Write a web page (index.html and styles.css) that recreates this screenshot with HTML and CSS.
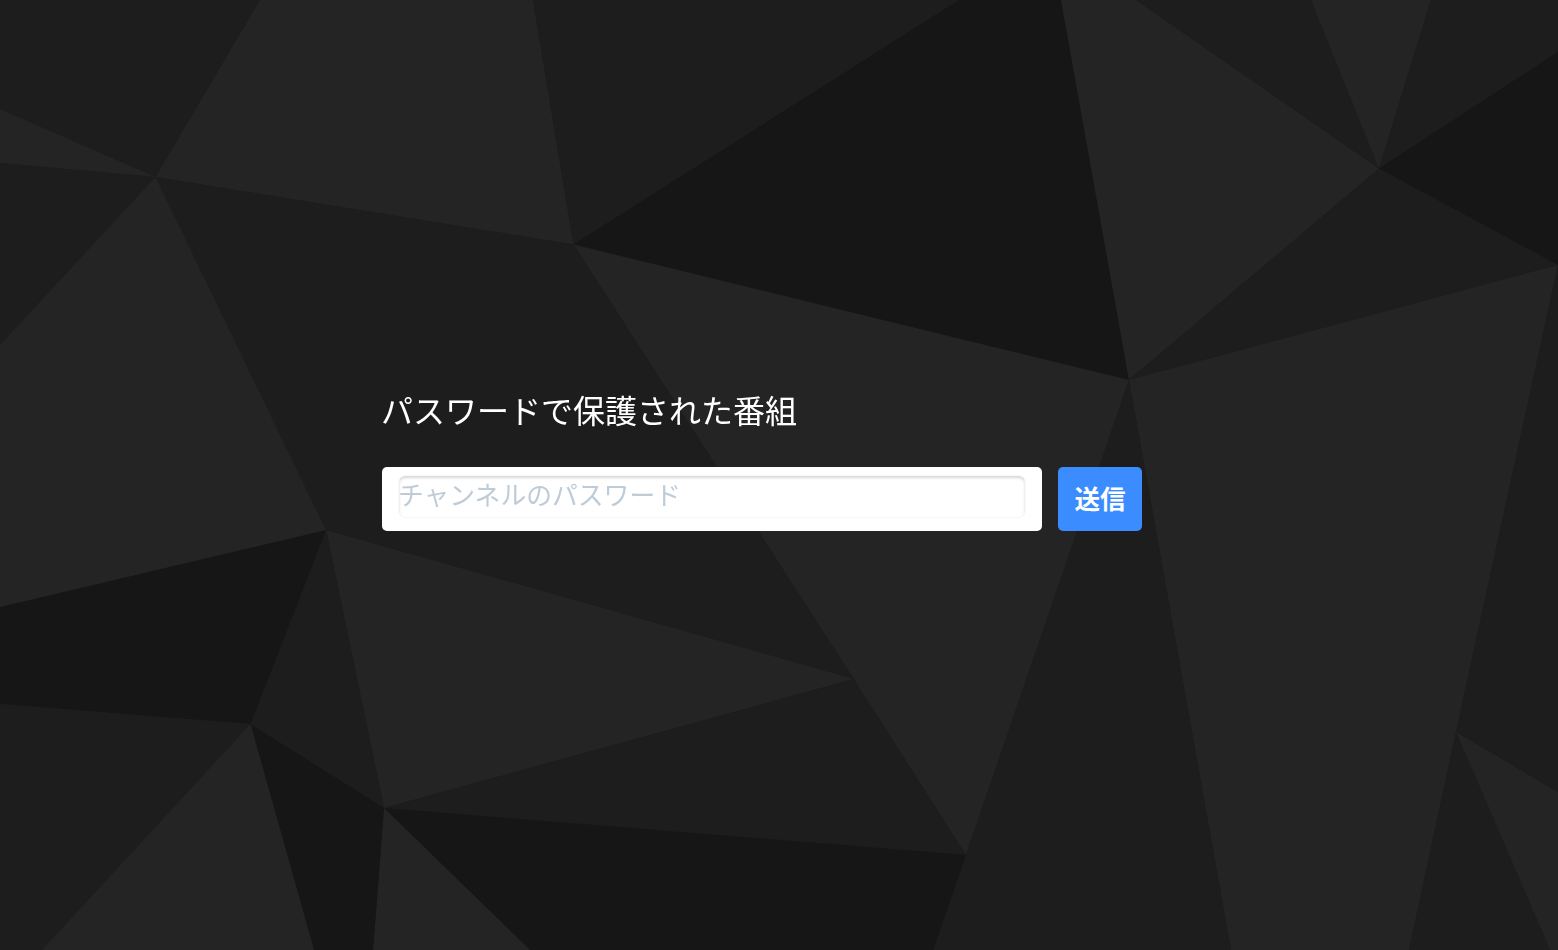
FILE: index.html
```html
<!DOCTYPE html>
<html lang="ja">
<head>
<meta charset="utf-8">
<title>パスワードで保護された番組</title>
<link rel="stylesheet" href="styles.css">
</head>
<body>
<svg class="backdrop" viewBox="0 0 1558 950" aria-hidden="true">
  <rect class="mid" width="1558" height="950"/>
  <polygon class="mid" points="0,0 260,0 155.5,177 0,109"/>
  <polygon class="light" points="0,109 155.5,177 0,163"/>
  <polygon class="mid" points="0,163 155.5,177 0,345"/>
  <polygon class="light" points="260,0 533,0 573.5,244.5 155.5,177"/>
  <polygon class="mid" points="533,0 959,0 573.5,244.5"/>
  <polygon class="dark" points="573.5,244.5 959,0 1061,0 1129,380"/>
  <polygon class="light" points="1061,0 1136,0 1379,168.5 1129,380"/>
  <polygon class="mid" points="1136,0 1311,0 1379,168.5"/>
  <polygon class="light" points="1311,0 1431,0 1379,168.5"/>
  <polygon class="mid" points="1431,0 1558,0 1558,52 1379,168.5"/>
  <polygon class="dark" points="1379,168.5 1558,52 1558,265"/>
  <polygon class="mid" points="1379,168.5 1558,265 1129,380"/>
  <polygon class="light" points="1129,380 1558,265 1456,732 1409,950 1231,950"/>
  <polygon class="mid" points="1558,265 1558,792 1456,732"/>
  <polygon class="light" points="1456,732 1558,792 1558,950 1550,950"/>
  <polygon class="mid" points="1456,732 1550,950 1409,950"/>
  <polygon class="light" points="573.5,244.5 1129,380 966,855"/>
  <polygon class="mid" points="1129,380 1231,950 933,950 966,855"/>
  <polygon class="mid" points="155.5,177 573.5,244.5 854,679 326,530"/>
  <polygon class="light" points="326,530 854,679 384,808"/>
  <polygon class="mid" points="854,679 966,855 384,808"/>
  <polygon class="dark" points="384,808 966,855 933,950 530,950"/>
  <polygon class="light" points="384,808 530,950 373,950"/>
  <polygon class="dark" points="250.5,724 384,808 373,950 314,950"/>
  <polygon class="mid" points="326,530 384,808 250.5,724"/>
  <polygon class="dark" points="326,530 250.5,724 0,704 0,607"/>
  <polygon class="light" points="0,345 155.5,177 326,530 0,607"/>
  <polygon class="mid" points="0,704 250.5,724 42,950 0,950"/>
  <polygon class="light" points="250.5,724 314,950 42,950"/>
</svg>
<main class="gate">
  <h1 class="gate-title">パスワードで保護された番組</h1>
  <form class="gate-form">
    <div class="field">
      <input class="field-input" type="password" placeholder="チャンネルのパスワード">
    </div>
    <button class="submit" type="button">送信</button>
  </form>
</main>
</body>
</html>
```
FILE: styles.css
```css
html, body {
  margin: 0;
  height: 100%;
  overflow: hidden;
  background: #1d1d1d;
}
body {
  font-family: "Noto Sans CJK JP", "Noto Sans", sans-serif;
}
.backdrop {
  position: fixed;
  inset: 0;
  width: 100%;
  height: 100%;
  display: block;
}
.light { fill: #242424; }
.mid { fill: #1d1d1d; }
.dark { fill: #161616; }
.gate {
  position: relative;
  box-sizing: border-box;
  width: 760px;
  margin-left: 382px;
  padding-top: 386px;
}
.gate-title {
  margin: 0 0 34px;
  height: 47px;
  font-size: 32px;
  line-height: 47px;
  font-weight: 400;
  color: #fff;
  text-indent: -1px;
}
.gate-form {
  display: flex;
  gap: 16px;
  height: 64px;
}
.field {
  box-sizing: border-box;
  width: 660px;
  height: 64px;
  padding: 8px 16px 13px;
  background: #fff;
  border-radius: 5px;
}
.field-input {
  box-sizing: border-box;
  display: block;
  width: 100%;
  height: 43px;
  margin: 0;
  padding: 0 0 6px;
  border: 1px solid #f7f7f7;
  border-radius: 7px;
  outline: none;
  background: #fff;
  box-shadow: inset 0 2px 3px rgba(0, 0, 0, 0.16);
  font-family: inherit;
  font-size: 25.8px;
  color: #333;
  text-indent: -1px;
}
.field-input::placeholder {
  color: #bfccd8;
  opacity: 1;
}
.submit {
  box-sizing: border-box;
  width: 84px;
  height: 64px;
  padding: 0 0 4px;
  border: 0;
  border-radius: 5px;
  background: #3a8cff;
  color: #fff;
  font-family: inherit;
  font-size: 25.6px;
  font-weight: 700;
}
```
